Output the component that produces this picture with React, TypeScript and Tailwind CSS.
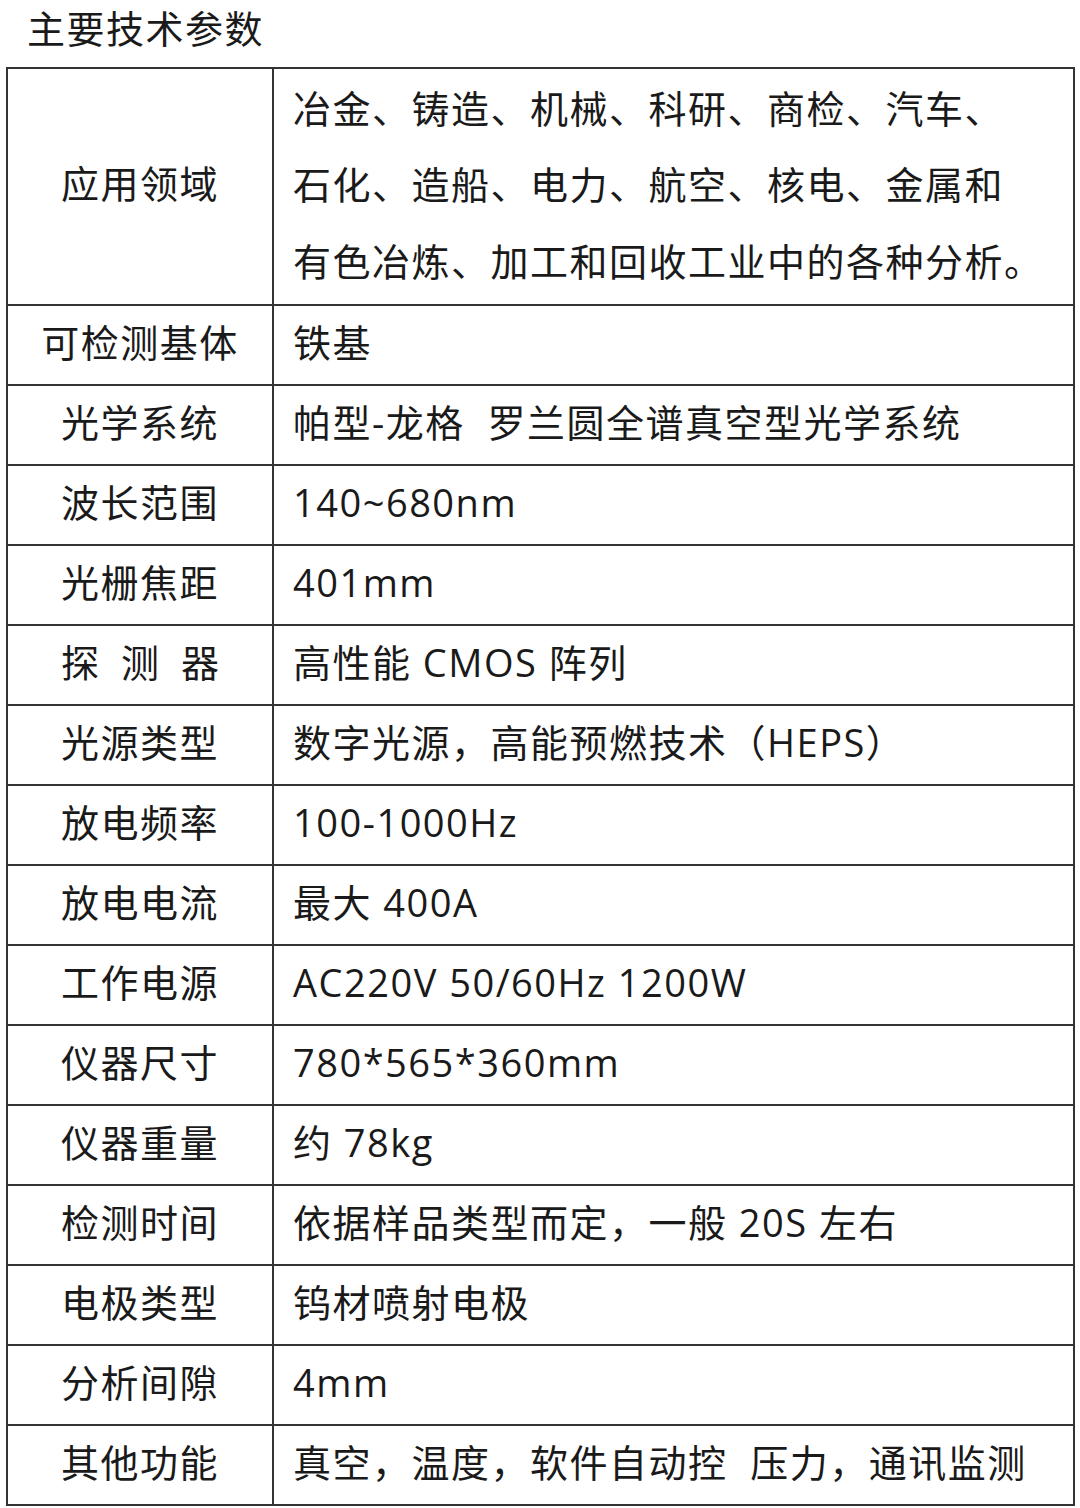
const rows: [string, string][] = [
  ["可检测基体", "铁基"],
  ["光学系统", "帕型-龙格  罗兰圆全谱真空型光学系统"],
  ["波长范围", "140~680nm"],
  ["光栅焦距", "401mm"],
  ["探 测 器", "高性能 CMOS 阵列"],
  ["光源类型", "数字光源，高能预燃技术（HEPS）"],
  ["放电频率", "100-1000Hz"],
  ["放电电流", "最大 400A"],
  ["工作电源", "AC220V 50/60Hz 1200W"],
  ["仪器尺寸", "780*565*360mm"],
  ["仪器重量", "约 78kg"],
  ["检测时间", "依据样品类型而定，一般 20S 左右"],
  ["电极类型", "钨材喷射电极"],
  ["分析间隙", "4mm"],
  ["其他功能", "真空，温度，软件自动控  压力，通讯监测"],
];

export default function App() {
  return (
    <div
      className="w-[1080px] h-[1508px] bg-white text-[#1a1a1a] text-[38px] tracking-[1.5px] overflow-hidden"
      style={{ fontFamily: '"Open Sans", "Noto Sans CJK SC", sans-serif' }}
    >
      <div className="h-[67px] pl-[27px] pt-[3px] leading-[50px]">主要技术参数</div>
      <table className="ml-[6px] w-[1069px] border-collapse border-2 border-[#333] table-fixed">
        <colgroup>
          <col className="w-[266px]" />
          <col />
        </colgroup>
        <tbody>
          <tr className="h-[237px]">
            <td className="border-2 border-[#333] text-center align-middle pb-[6px]">应用领域</td>
            <td className="border-2 border-[#333] pl-[19px] pr-2 pb-[4px] leading-[76.5px] align-middle whitespace-pre-line">
              {"冶金、铸造、机械、科研、商检、汽车、\n石化、造船、电力、航空、核电、金属和\n有色冶炼、加工和回收工业中的各种分析。"}
            </td>
          </tr>
          {rows.map(([k, v]) => (
            <tr key={k} className="h-[80px]">
              <td className="border-2 border-[#333] text-center align-middle whitespace-pre pb-[6px]">
                {k === "探 测 器" ? <span className="tracking-[22px] pl-[22px]">探测器</span> : k}
              </td>
              <td className="border-2 border-[#333] pl-[19px] pb-[6px] align-middle whitespace-pre">{v}</td>
            </tr>
          ))}
        </tbody>
      </table>
    </div>
  );
}
